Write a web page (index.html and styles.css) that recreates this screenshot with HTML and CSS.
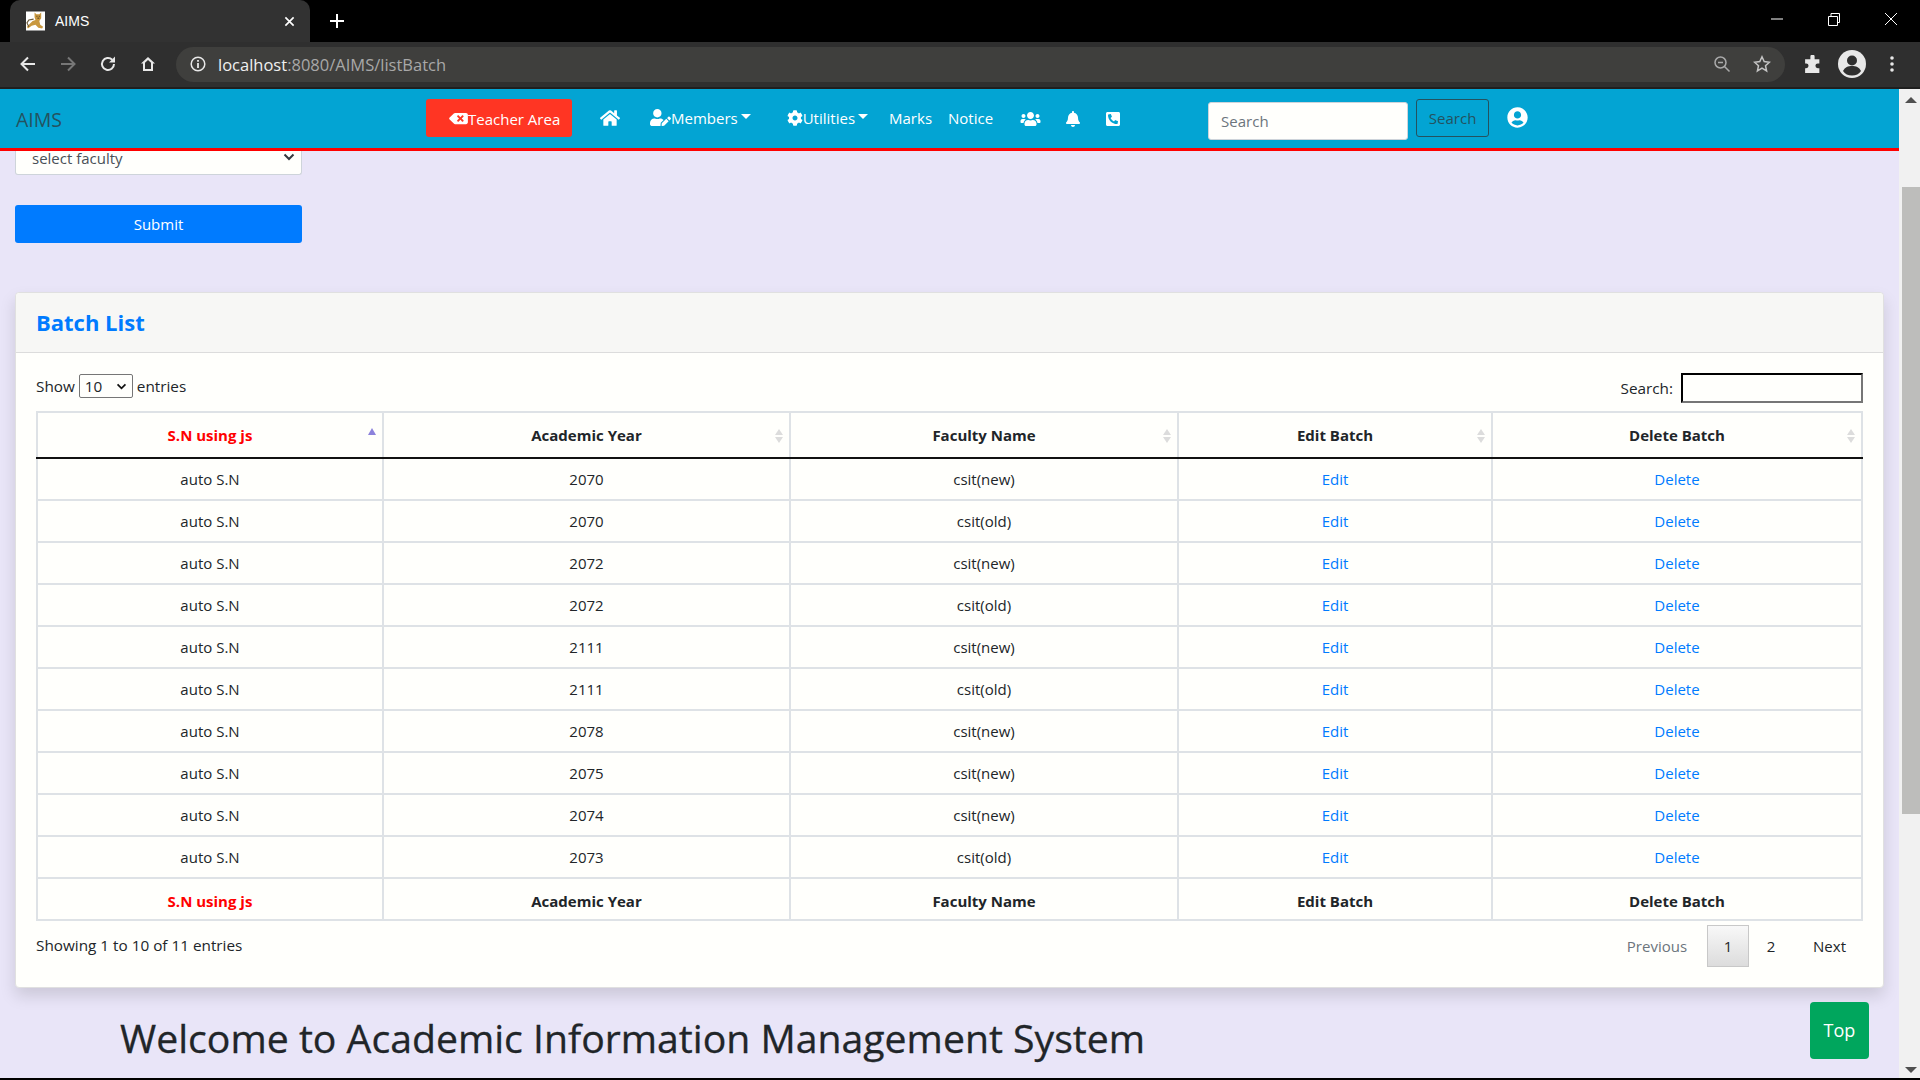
FILE: index.html
```html
<!DOCTYPE html>
<html lang="en">
<head>
    <meta charset="UTF-8">
    <title>AIMS</title>
    <link rel="stylesheet" href="styles.css">
</head>
<body>
    <div class="tabstrip">
        <div class="tab">
            <svg class="favicon" viewBox="0 0 20 20"><rect width="20" height="20" fill="#fff"/><path d="M9 1l2 2h3l2-2v6l-2 3 1 4 3 2-1 2-4-1-3-3-4 1-4 3-1-2 3-3 3-3 3-1-1-3z" fill="#c9983f"/><path d="M8 8L3 9 1 12l2 4" fill="none" stroke="#6b5a3a" stroke-width="1.200"/><path d="M11 5h1M13.500 5h1M12 7h2" stroke="#4a3a20" stroke-width="1"/></svg>
            <span class="tab-title">AIMS</span>
            <svg class="tab-close" viewBox="0 0 12 12"><path d="M1.500 1.500l9 9M10.500 1.500l-9 9" stroke="#fff" stroke-width="1.800"/></svg>
        </div>
        <svg class="new-tab" viewBox="0 0 16 16"><path d="M8 1v14M1 8h14" stroke="#fff" stroke-width="2"/></svg>
        <div class="window-btns">
            <svg viewBox="0 0 14 14"><path d="M1 7h12" stroke="#fff" stroke-width="1"/></svg>
            <svg viewBox="0 0 14 14"><path d="M1.500 4.500h9v9h-9zM4 4.500v-3h8.500v9h-2" fill="none" stroke="#fff" stroke-width="1"/></svg>
            <svg viewBox="0 0 14 14"><path d="M1 1l12 12M13 1L1 13" stroke="#fff" stroke-width="1"/></svg>
        </div>
    </div>

    <div class="toolbar">
        <svg class="tool-icon" viewBox="0 0 18 18"><path d="M16 9H3M9 2.500L2.500 9 9 15.500" fill="none" stroke="#e8e8e8" stroke-width="2"/></svg>
        <svg class="tool-icon" viewBox="0 0 18 18"><path d="M2 9h13M9 2.500L15.500 9 9 15.500" fill="none" stroke="#777" stroke-width="2"/></svg>
        <svg class="tool-icon" viewBox="0 0 18 18"><path d="M15 9a6 6 0 1 1-1.800-4.300" fill="none" stroke="#e8e8e8" stroke-width="2"/><path d="M16 1.500v6h-6z" fill="#e8e8e8"/></svg>
        <svg class="tool-icon" viewBox="0 0 18 18"><path d="M9 2L2 8.500h2V16h10V8.500h2zM6 14V7.700l3-2.800 3 2.800V14z" fill="#e8e8e8" fill-rule="evenodd"/></svg>
        <div class="urlbar">
            <svg class="info-icon" viewBox="0 0 16 16"><circle cx="8" cy="8" r="6.800" fill="none" stroke="#e8e8e8" stroke-width="1.500"/><path d="M8 7v5M8 4v1.800" stroke="#e8e8e8" stroke-width="1.800"/></svg>
            <span class="url"><span class="url-host">localhost</span>:8080/AIMS/listBatch</span>
            <svg class="url-zoom" viewBox="0 0 18 18"><circle cx="7.500" cy="7.500" r="5.500" fill="none" stroke="#aaa" stroke-width="1.500"/><path d="M5 7.500h5M11.500 11.500l5 5" stroke="#aaa" stroke-width="1.500"/></svg>
            <svg class="url-star" viewBox="0 0 18 18"><path d="M9 1.800l2.200 4.800 5.200.6-3.900 3.500 1.100 5.200L9 13.200l-4.600 2.700 1.100-5.200-3.900-3.500 5.200-.6z" fill="none" stroke="#c4c4c4" stroke-width="1.500"/></svg>
        </div>
        <svg class="ext-icon" viewBox="0 0 18 18"><path d="M7 1.500a2 2 0 0 1 4 0V4h4.500v4H14a2.200 2.200 0 0 0 0 4.500h1.500V17H2v-4.500h1a2.200 2.200 0 0 0 0-4.500H2V4h5z" fill="#e8e8e8"/></svg>
        <svg class="profile-icon" viewBox="0 0 28 28"><circle cx="14" cy="14" r="14" fill="#e8e8e8"/><circle cx="14" cy="10.500" r="5" fill="#2f2f2f"/><path d="M5 21c2-4 5-5 9-5s7 1 9 5c-2 3-5 4.500-9 4.500S7 24 5 21z" fill="#2f2f2f"/></svg>
        <svg class="menu-icon" viewBox="0 0 4 18"><circle cx="2" cy="3" r="1.800" fill="#e8e8e8"/><circle cx="2" cy="9" r="1.800" fill="#e8e8e8"/><circle cx="2" cy="15" r="1.800" fill="#e8e8e8"/></svg>
    </div>

    <div class="viewport">
        <div class="page">
            <nav class="navbar">
                <a class="brand">AIMS</a>
                <a class="btn-teacher">
                    <svg class="icon-backspace" viewBox="0 0 640 512"><path d="M576 64H205.260A63.970 63.970 0 0 0 160 82.750L9.370 233.370c-12.500 12.500-12.500 32.760 0 45.250L160 429.250c12 12 28.280 18.750 45.250 18.750H576c35.350 0 64-28.650 64-64V128c0-35.350-28.650-64-64-64zm-84.690 254.060c6.250 6.250 6.250 16.380 0 22.630l-22.620 22.620c-6.250 6.250-16.380 6.250-22.630 0L384 301.250l-62.060 62.060c-6.250 6.250-16.380 6.250-22.630 0l-22.620-22.620c-6.250-6.250-6.250-16.380 0-22.630L338.750 256l-62.060-62.060c-6.250-6.250-6.250-16.380 0-22.630l22.620-22.620c6.250-6.250 16.380-6.250 22.630 0L384 210.750l62.060-62.060c6.250-6.250 16.380-6.250 22.630 0l22.620 22.620c6.250 6.250 6.250 16.380 0 22.630L429.250 256l62.060 62.060z"/></svg><span class="teacher-text">Teacher Area</span>
                </a>
                <a class="nav-home"><svg class="nav-icon icon-home" viewBox="0 0 576 512"><path d="M280.370 148.260L96 300.110V464a16 16 0 0 0 16 16l112.060-.29a16 16 0 0 0 15.920-16V368a16 16 0 0 1 16-16h64a16 16 0 0 1 16 16v95.640a16 16 0 0 0 16 16.050L464 480a16 16 0 0 0 16-16V300L295.670 148.260a12.190 12.190 0 0 0-15.300 0zM571.600 251.470L488 182.560V44.050a12 12 0 0 0-12-12h-56a12 12 0 0 0-12 12v72.610L318.470 43a48 48 0 0 0-61 0L4.340 251.470a12 12 0 0 0-1.600 16.900l25.500 31A12 12 0 0 0 45.150 301l235.220-193.740a12.190 12.190 0 0 1 15.300 0L530.900 301a12 12 0 0 0 16.900-1.600l25.500-31a12 12 0 0 0-1.700-16.930z"/></svg></a>
                <a class="nav-link nav-members"><svg class="nav-icon icon-useredit" viewBox="0 0 640 512"><path d="M224 256c70.700 0 128-57.300 128-128S294.700 0 224 0 96 57.300 96 128s57.300 128 128 128zm89.600 32h-16.700c-22.200 10.200-46.900 16-72.900 16s-50.600-5.800-72.900-16h-16.700C60.200 288 0 348.200 0 422.400V464c0 26.500 21.500 48 48 48h274.900c-2.400-6.800-3.400-14-2.600-21.300l6.800-60.900 1.200-11.100 7.900-7.900 77.300-77.300c-24.500-27.700-60-45.500-99.900-45.500zm45.300 145.300l-6.800 61c-1.100 10.200 7.500 18.800 17.600 17.600l60.900-6.800 137.900-137.900-71.700-71.700-137.900 137.800zM633 268.900L595.100 231c-9.300-9.300-24.500-9.300-33.800 0l-37.800 37.800-4.100 4.100 71.800 71.700 41.800-41.800c9.300-9.400 9.300-24.500 0-33.900z"/></svg>Members<span class="caret"></span></a>
                <a class="nav-link nav-utilities"><svg class="nav-icon icon-cog" viewBox="0 0 512 512"><path d="M487.400 315.700l-42.600-24.600c4.300-23.200 4.300-47 0-70.200l42.600-24.600c4.900-2.800 7.100-8.600 5.500-14-11.100-35.600-30-67.800-54.700-94.600-3.800-4.100-10-5.100-14.800-2.300L380.800 110c-17.900-15.400-38.500-27.300-60.800-35.100V25.800c0-5.600-3.900-10.500-9.400-11.700-36.700-8.200-74.300-7.800-109.200 0-5.500 1.200-9.400 6.100-9.400 11.700V75c-22.200 7.900-42.800 19.800-60.800 35.100L88.700 85.500c-4.900-2.800-11-1.900-14.800 2.300-24.700 26.700-43.600 58.900-54.700 94.600-1.700 5.400.6 11.200 5.500 14L67.300 221c-4.300 23.200-4.300 47 0 70.200l-42.600 24.600c-4.900 2.800-7.100 8.600-5.500 14 11.100 35.600 30 67.800 54.700 94.600 3.800 4.100 10 5.100 14.800 2.300l42.600-24.600c17.900 15.400 38.500 27.300 60.800 35.100v49.200c0 5.600 3.900 10.500 9.400 11.700 36.700 8.200 74.300 7.800 109.200 0 5.500-1.200 9.400-6.100 9.400-11.700v-49.200c22.200-7.900 42.800-19.800 60.800-35.100l42.600 24.600c4.900 2.800 11 1.900 14.800-2.300 24.700-26.700 43.600-58.900 54.700-94.600 1.500-5.500-.7-11.300-5.600-14.100zM256 336c-44.100 0-80-35.900-80-80s35.900-80 80-80 80 35.900 80 80-35.900 80-80 80z"/></svg>Utilities<span class="caret"></span></a>
                <a class="nav-link nav-marks">Marks</a>
                <a class="nav-link nav-notice">Notice</a>
                <a class="nav-users"><svg class="nav-icon icon-users" viewBox="0 0 640 512"><path d="M96 224c35.300 0 64-28.700 64-64s-28.700-64-64-64-64 28.700-64 64 28.700 64 64 64zm448 0c35.300 0 64-28.700 64-64s-28.700-64-64-64-64 28.700-64 64 28.700 64 64 64zm32 32h-64c-17.600 0-33.500 7.100-45.100 18.600 40.300 22.100 68.900 62 75.100 109.400h66c17.700 0 32-14.300 32-32v-32c0-35.300-28.700-64-64-64zm-256 0c61.900 0 112-50.100 112-112S381.900 32 320 32 208 82.100 208 144s50.100 112 112 112zm76.800 32h-8.300c-20.800 10-43.900 16-68.500 16s-47.600-6-68.500-16h-8.300C179.600 288 128 339.600 128 403.200V432c0 26.500 21.500 48 48 48h288c26.500 0 48-21.500 48-48v-28.800c0-63.600-51.600-115.200-115.200-115.200zm-223.700-13.400C161.500 263.100 145.600 256 128 256H64c-35.300 0-64 28.700-64 64v32c0 17.700 14.300 32 32 32h65.900c6.300-47.400 34.900-87.300 75.200-109.400z"/></svg></a>
                <a class="nav-bell"><svg class="nav-icon icon-bell" viewBox="0 0 448 512"><path d="M224 512c35.320 0 63.970-28.650 63.970-64H160.030c0 35.350 28.650 64 63.970 64zm215.390-149.710c-19.320-20.760-55.470-51.990-55.470-154.290 0-77.700-54.480-139.900-127.940-155.160V32c0-17.670-14.320-32-31.980-32s-31.980 14.330-31.980 32v20.840C118.560 68.100 64.080 130.300 64.080 208c0 102.300-36.150 133.530-55.470 154.290-6 6.450-8.660 14.160-8.610 21.710.11 16.400 12.980 32 32.100 32h383.800c19.120 0 32-15.600 32.100-32 .05-7.550-2.610-15.270-8.610-21.710z"/></svg></a>
                <a class="nav-phone"><svg class="nav-icon icon-phone" viewBox="0 0 448 512"><path d="M400 32H48C21.490 32 0 53.490 0 80v352c0 26.510 21.490 48 48 48h352c26.510 0 48-21.490 48-48V80c0-26.510-21.490-48-48-48zM94 416c-7.033 0-13.057-4.873-14.616-11.627l-14.998-65a15 15 0 0 1 8.707-17.160l69.998-29.999a15 15 0 0 1 17.518 4.289l30.997 37.885c48.944-22.963 88.297-62.858 110.748-110.748l-37.886-30.997a15 15 0 0 1-4.289-17.518l30-69.998a15.001 15.001 0 0 1 17.160-8.707l65 14.998A14.997 14.997 0 0 1 384 126c0 160.292-129.945 290-290 290z"/></svg></a>
                <input class="nav-search" type="text" placeholder="Search">
                <button class="nav-search-btn">Search</button>
                <a class="nav-account"><svg class="nav-icon icon-account" viewBox="0 0 496 512"><path d="M248 8C111 8 0 119 0 256s111 248 248 248 248-111 248-248S385 8 248 8zm0 96c48.600 0 88 39.400 88 88s-39.400 88-88 88-88-39.400-88-88 39.400-88 88-88zm0 344c-58.700 0-111.300-26.600-146.500-68.200 18.800-35.400 55.600-59.800 98.500-59.800 2.400 0 4.800.4 7.100 1.100 13 4.200 26.600 6.900 40.900 6.900 14.300 0 28-2.700 40.900-6.900 2.300-.7 4.700-1.100 7.100-1.100 42.900 0 79.700 24.400 98.500 59.800C359.300 421.400 306.700 448 248 448z"/></svg></a>
            </nav>

            <div class="content">
                <div class="faculty-select">
                    <span>select faculty</span>
                    <svg class="chevron" viewBox="0 0 12 8"><path d="M1.500 1.500L6 6l4.500-4.500" fill="none" stroke="#343a40" stroke-width="2"/></svg>
                </div>
                <button class="btn-submit">Submit</button>

                <div class="card">
                    <div class="card-header"><h4>Batch List</h4></div>
                    <div class="card-body">
                        <div class="table-top">
                            <div class="length">Show
                                <span class="length-select">10<svg class="chevron-small" viewBox="0 0 12 8"><path d="M1.500 1.500L6 6l4.500-4.500" fill="none" stroke="#111" stroke-width="2"/></svg></span>
                                entries</div>
                            <div class="filter">Search: <input type="text"></div>
                        </div>
                        <table class="batch-table">
                            <colgroup>
                                <col class="col-sn"><col class="col-year"><col class="col-faculty"><col class="col-edit"><col class="col-delete">
                            </colgroup>
                            <thead>
                                <tr>
                                    <th class="sn-head sort-asc">S.N using js</th>
                                    <th class="sort">Academic Year</th>
                                    <th class="sort">Faculty Name</th>
                                    <th class="sort">Edit Batch</th>
                                    <th class="sort">Delete Batch</th>
                                </tr>
                            </thead>
                            <tbody id="rows">
                                <tr><td>auto S.N</td><td>2070</td><td>csit(new)</td><td><a>Edit</a></td><td><a>Delete</a></td></tr>
                                <tr><td>auto S.N</td><td>2070</td><td>csit(old)</td><td><a>Edit</a></td><td><a>Delete</a></td></tr>
                                <tr><td>auto S.N</td><td>2072</td><td>csit(new)</td><td><a>Edit</a></td><td><a>Delete</a></td></tr>
                                <tr><td>auto S.N</td><td>2072</td><td>csit(old)</td><td><a>Edit</a></td><td><a>Delete</a></td></tr>
                                <tr><td>auto S.N</td><td>2111</td><td>csit(new)</td><td><a>Edit</a></td><td><a>Delete</a></td></tr>
                                <tr><td>auto S.N</td><td>2111</td><td>csit(old)</td><td><a>Edit</a></td><td><a>Delete</a></td></tr>
                                <tr><td>auto S.N</td><td>2078</td><td>csit(new)</td><td><a>Edit</a></td><td><a>Delete</a></td></tr>
                                <tr><td>auto S.N</td><td>2075</td><td>csit(new)</td><td><a>Edit</a></td><td><a>Delete</a></td></tr>
                                <tr><td>auto S.N</td><td>2074</td><td>csit(new)</td><td><a>Edit</a></td><td><a>Delete</a></td></tr>
                                <tr><td>auto S.N</td><td>2073</td><td>csit(old)</td><td><a>Edit</a></td><td><a>Delete</a></td></tr>
                            </tbody>
                            <tfoot>
                                <tr>
                                    <th class="sn-head">S.N using js</th>
                                    <th>Academic Year</th>
                                    <th>Faculty Name</th>
                                    <th>Edit Batch</th>
                                    <th>Delete Batch</th>
                                </tr>
                            </tfoot>
                        </table>
                        <div class="table-bottom">
                            <div class="info">Showing 1 to 10 of 11 entries</div>
                            <div class="paging">
                                <a class="page-prev">Previous</a>
                                <a class="page-current">1</a>
                                <a class="page-two">2</a>
                                <a class="page-next">Next</a>
                            </div>
                        </div>
                    </div>
                </div>

                <h1 class="welcome">Welcome to Academic Information Management System</h1>
            </div>
            <a class="btn-top">Top</a>
        </div>
        <div class="scrollbar">
            <span class="arrow-up"></span>
            <div class="thumb"></div>
            <span class="arrow-down"></span>
        </div>
    </div>
    <div class="bottom-edge"></div>
</body>
</html>
```

FILE: styles.css
```css
* {
    box-sizing: border-box;
}
html, body {
    height: 100%;
}
body {
    margin: 0;
    display: flex;
    flex-direction: column;
    overflow: hidden;
    font-family: "Open Sans", "Noto Sans", sans-serif;
    font-size: 15px;
    color: #212529;
    background: #000;
}

/* browser chrome */
.tabstrip {
    height: 42px;
    flex: none;
    display: flex;
    align-items: flex-end;
    background: #000;
}
.tab {
    width: 300px;
    height: 42px;
    margin-left: 10px;
    display: flex;
    align-items: center;
    padding-left: 16px;
    background: #323232;
    border-radius: 10px 10px 0 0;
    color: #fff;
    font-size: 14px;
}
.favicon {
    width: 19px;
    height: 20px;
}
.tab-title {
    margin-left: 10px;
    flex: 1;
    font-family: "Liberation Sans", sans-serif;
}
.tab-close {
    width: 11px;
    height: 11px;
    margin-right: 15px;
}
.new-tab {
    width: 16px;
    height: 16px;
    margin: 0 0 13px 19px;
}
.window-btns {
    margin-left: auto;
    align-self: flex-start;
    display: flex;
    gap: 43px;
    padding: 12px 22px 0 0;
}
.window-btns svg {
    width: 14px;
    height: 14px;
}
.toolbar {
    height: 47px;
    flex: none;
    display: flex;
    align-items: center;
    background: #2f2f2f;
    border-bottom: 2px solid #1f1f1f;
    padding: 0 0 1px 19px;
}
.tool-icon {
    width: 18px;
    height: 18px;
    margin-right: 22px;
}
.urlbar {
    width: 1609px;
    height: 35px;
    margin-left: -3px;
    display: flex;
    align-items: center;
    background: #3f3f3d;
    border-radius: 18px;
    padding: 0 14px 0 14px;
}
.info-icon {
    width: 16px;
    height: 16px;
}
.url {
    margin-left: 12px;
    flex: 1;
    font-size: 16.500px;
    color: #a8a8a8;
}
.url-host {
    color: #f0f0f0;
}
.url-zoom {
    width: 18px;
    height: 18px;
    margin-right: 22px;
}
.url-star {
    width: 18px;
    height: 18px;
}
.ext-icon {
    width: 19px;
    height: 19px;
    margin-left: 18px;
}
.profile-icon {
    width: 28px;
    height: 28px;
    margin-left: 16px;
}
.menu-icon {
    width: 4px;
    height: 18px;
    margin-left: 24px;
}

.viewport {
    flex: 1;
    min-height: 0;
    display: flex;
}
.page {
    position: relative;
    flex: 1;
    min-width: 0;
    display: flex;
    flex-direction: column;
    overflow: hidden;
    background: #e9e5f8;
}
.bottom-edge {
    height: 2px;
    flex: none;
    background: #000;
}

/* navbar */
.navbar {
    height: 62px;
    flex: none;
    display: flex;
    align-items: center;
    background: #03a4d3;
    border-bottom: 3px solid #f00;
    padding-left: 16px;
    color: #fff;
}
.brand {
    width: 410px;
    margin-top: 1px;
    font-size: 19.500px;
    color: #24525f;
}
.btn-teacher {
    width: 146px;
    height: 38px;
    display: flex;
    align-items: center;
    padding-left: 23px;
    margin-top: -1px;
    background: #ff3523;
    border-radius: 3px;
    white-space: nowrap;
}
.teacher-text {
    margin-top: 1px;
}
.icon-backspace {
    width: 19px;
    height: 15px;
    fill: #fff;
}
.nav-icon {
    display: block;
    fill: #fff;
}
.nav-home {
    margin: -1px 0 0 28px;
}
.icon-home {
    width: 20px;
    height: 18px;
}
.nav-link {
    display: flex;
    align-items: center;
    white-space: nowrap;
}
.nav-members {
    margin: -2px 0 0 30px;
}
.icon-useredit {
    width: 21px;
    height: 17px;
}
.caret {
    width: 0;
    height: 0;
    margin: 0 0 2px 3px;
    border-left: 5px solid transparent;
    border-right: 5px solid transparent;
    border-top: 5px solid #fff;
}
.nav-utilities {
    margin: -2px 0 0 36px;
}
.icon-cog {
    width: 16px;
    height: 16px;
}
.nav-marks {
    margin: -1px 0 0 21px;
}
.nav-notice {
    margin: -1px 0 0 16px;
}
.nav-users {
    margin: 0 0 0 27px;
}
.icon-users {
    width: 21px;
    height: 16px;
}
.nav-bell {
    margin: 0 0 0 25px;
}
.icon-bell {
    width: 14px;
    height: 16px;
}
.nav-phone {
    margin: 0 0 0 26px;
}
.icon-phone {
    width: 14px;
    height: 16px;
    transform: scaleX(-1);
}
.nav-search {
    width: 200px;
    height: 38px;
    margin: 5px 0 0 88px;
    padding: 0 12px;
    border: 1px solid #ced4da;
    border-radius: 3px;
    background: #fffffc;
    font: inherit;
}
.nav-search::placeholder {
    color: #6c757d;
}
.nav-search-btn {
    width: 73px;
    height: 38px;
    margin: -1px 0 0 8px;
    border: 1px solid #24525f;
    border-radius: 3px;
    background: transparent;
    color: #24525f;
    font: inherit;
}
.nav-account {
    margin: -2px 0 0 18px;
}
.icon-account {
    width: 21px;
    height: 21px;
}

/* form above the card */
.content {
    flex: 1;
    padding-left: 15px;
    padding-right: 16px;
}
.faculty-select {
    width: 287px;
    height: 24px;
    display: flex;
    align-items: flex-end;
    justify-content: space-between;
    padding: 0 6px 5px 16px;
    background: #fffffc;
    border: 1px solid #ced4da;
    border-top: 0;
    border-radius: 0 0 3px 3px;
    color: #495057;
    line-height: 22px;
}
.chevron {
    width: 12px;
    height: 8px;
    margin-bottom: 8px;
}
.btn-submit {
    display: block;
    width: 287px;
    height: 38px;
    margin-top: 30px;
    background: #007bff;
    border: 0;
    border-radius: 3px;
    color: #fff;
    font: inherit;
}

/* card + table */
.card {
    width: 1869px;
    height: 696px;
    margin-top: 49px;
    background: #fffffc;
    border: 1px solid #e0e0e0;
    border-radius: 4px;
    box-shadow: 0 8px 16px rgba(0, 0, 0, 0.13);
}
.card-header {
    height: 60px;
    display: flex;
    align-items: center;
    padding: 0 0 1px 20px;
    background: #f7f7f5;
    border-bottom: 1px solid #dcdcdc;
    border-radius: 4px 4px 0 0;
}
.card-header h4 {
    margin: 0;
    font-size: 22px;
    font-weight: 700;
    color: #007bff;
}
.card-body {
    padding: 20px 20px 0;
}
.table-top {
    height: 38px;
    display: flex;
    justify-content: space-between;
    font-size: 15.300px;
}
.length {
    height: 26px;
    display: flex;
    align-items: center;
    gap: 4px;
}
.length-select {
    width: 54px;
    height: 24px;
    display: flex;
    align-items: center;
    justify-content: space-between;
    padding: 0 5px;
    border: 1px solid #767676;
    border-radius: 2px;
    color: #212529;
}
.chevron-small {
    width: 11px;
    height: 7px;
}
.filter {
    display: flex;
    align-items: center;
    height: 30px;
    gap: 8px;
}
.filter input {
    width: 182px;
    height: 30px;
    background: #fffffc;
    border: 2px inset #767676;
    border-color: #222 #767676 #767676 #222;
}
.batch-table {
    width: 1825px;
    table-layout: fixed;
    border-collapse: collapse;
    text-align: center;
}
.col-sn { width: 346px; }
.col-year { width: 407px; }
.col-faculty { width: 388px; }
.col-edit { width: 314px; }
.col-delete { width: 370px; }
.batch-table th, .batch-table td {
    height: 42px;
    padding: 0;
    border: 2px solid #dee2e6;
}
.batch-table thead th {
    position: relative;
    height: 46px;
    padding-bottom: 1px;
    border-bottom: 2px solid #111;
}
.batch-table tfoot th {
    padding-top: 3px;
    border-top: 2px solid #111;
}
.batch-table a {
    color: #007bff;
}
.sn-head {
    color: #f00;
}
.sort::before, .sort::after, .sort-asc::before {
    content: "";
    position: absolute;
    right: 6px;
    width: 0;
    height: 0;
    border-left: 4px solid transparent;
    border-right: 4px solid transparent;
}
.sort::before {
    top: 16px;
    border-bottom: 6px solid #dcdcdc;
}
.sort::after {
    top: 24px;
    border-top: 6px solid #dcdcdc;
}
.sort-asc::before {
    top: 15px;
    border-bottom: 7px solid #8c82dc;
}
.table-bottom {
    display: flex;
    justify-content: space-between;
}
.info {
    padding-top: 14px;
    font-size: 15.300px;
}
.paging {
    display: flex;
    align-items: center;
    margin-top: 4px;
}
.page-prev {
    color: #6c757d;
    margin-right: 20px;
}
.page-current {
    width: 42px;
    height: 42px;
    display: flex;
    align-items: center;
    justify-content: center;
    border: 1px solid #c8c8c8;
    background: linear-gradient(#f8f8f8, #dcdcdc);
}
.page-two {
    width: 44px;
    text-align: center;
}
.page-next {
    margin-left: 20px;
    margin-right: 17px;
}
.welcome {
    margin: 26px 0 0 105px;
    font-size: 39.200px;
    font-weight: 500;
    line-height: 48px;
    white-space: nowrap;
    -webkit-text-stroke: 0.3px #212529;
}
.btn-top {
    position: absolute;
    right: 30px;
    top: 913px;
    width: 59px;
    height: 57px;
    display: flex;
    align-items: center;
    justify-content: center;
    padding-bottom: 2px;
    background: #00a65d;
    border-radius: 4px;
    color: #fff;
    font-size: 18px;
}

/* page scrollbar */
.scrollbar {
    position: relative;
    width: 21px;
    flex: none;
    background: #f1f1f1;
}
.thumb {
    position: absolute;
    left: 3px;
    right: 0;
    top: 98px;
    height: 627px;
    background: #bdbdbb;
}
.arrow-up, .arrow-down {
    position: absolute;
    left: 6px;
    width: 0;
    height: 0;
    border-left: 6px solid transparent;
    border-right: 6px solid transparent;
}
.arrow-up {
    top: 8px;
    border-bottom: 6px solid #505050;
}
.arrow-down {
    bottom: 5px;
    border-top: 6px solid #505050;
}
```
